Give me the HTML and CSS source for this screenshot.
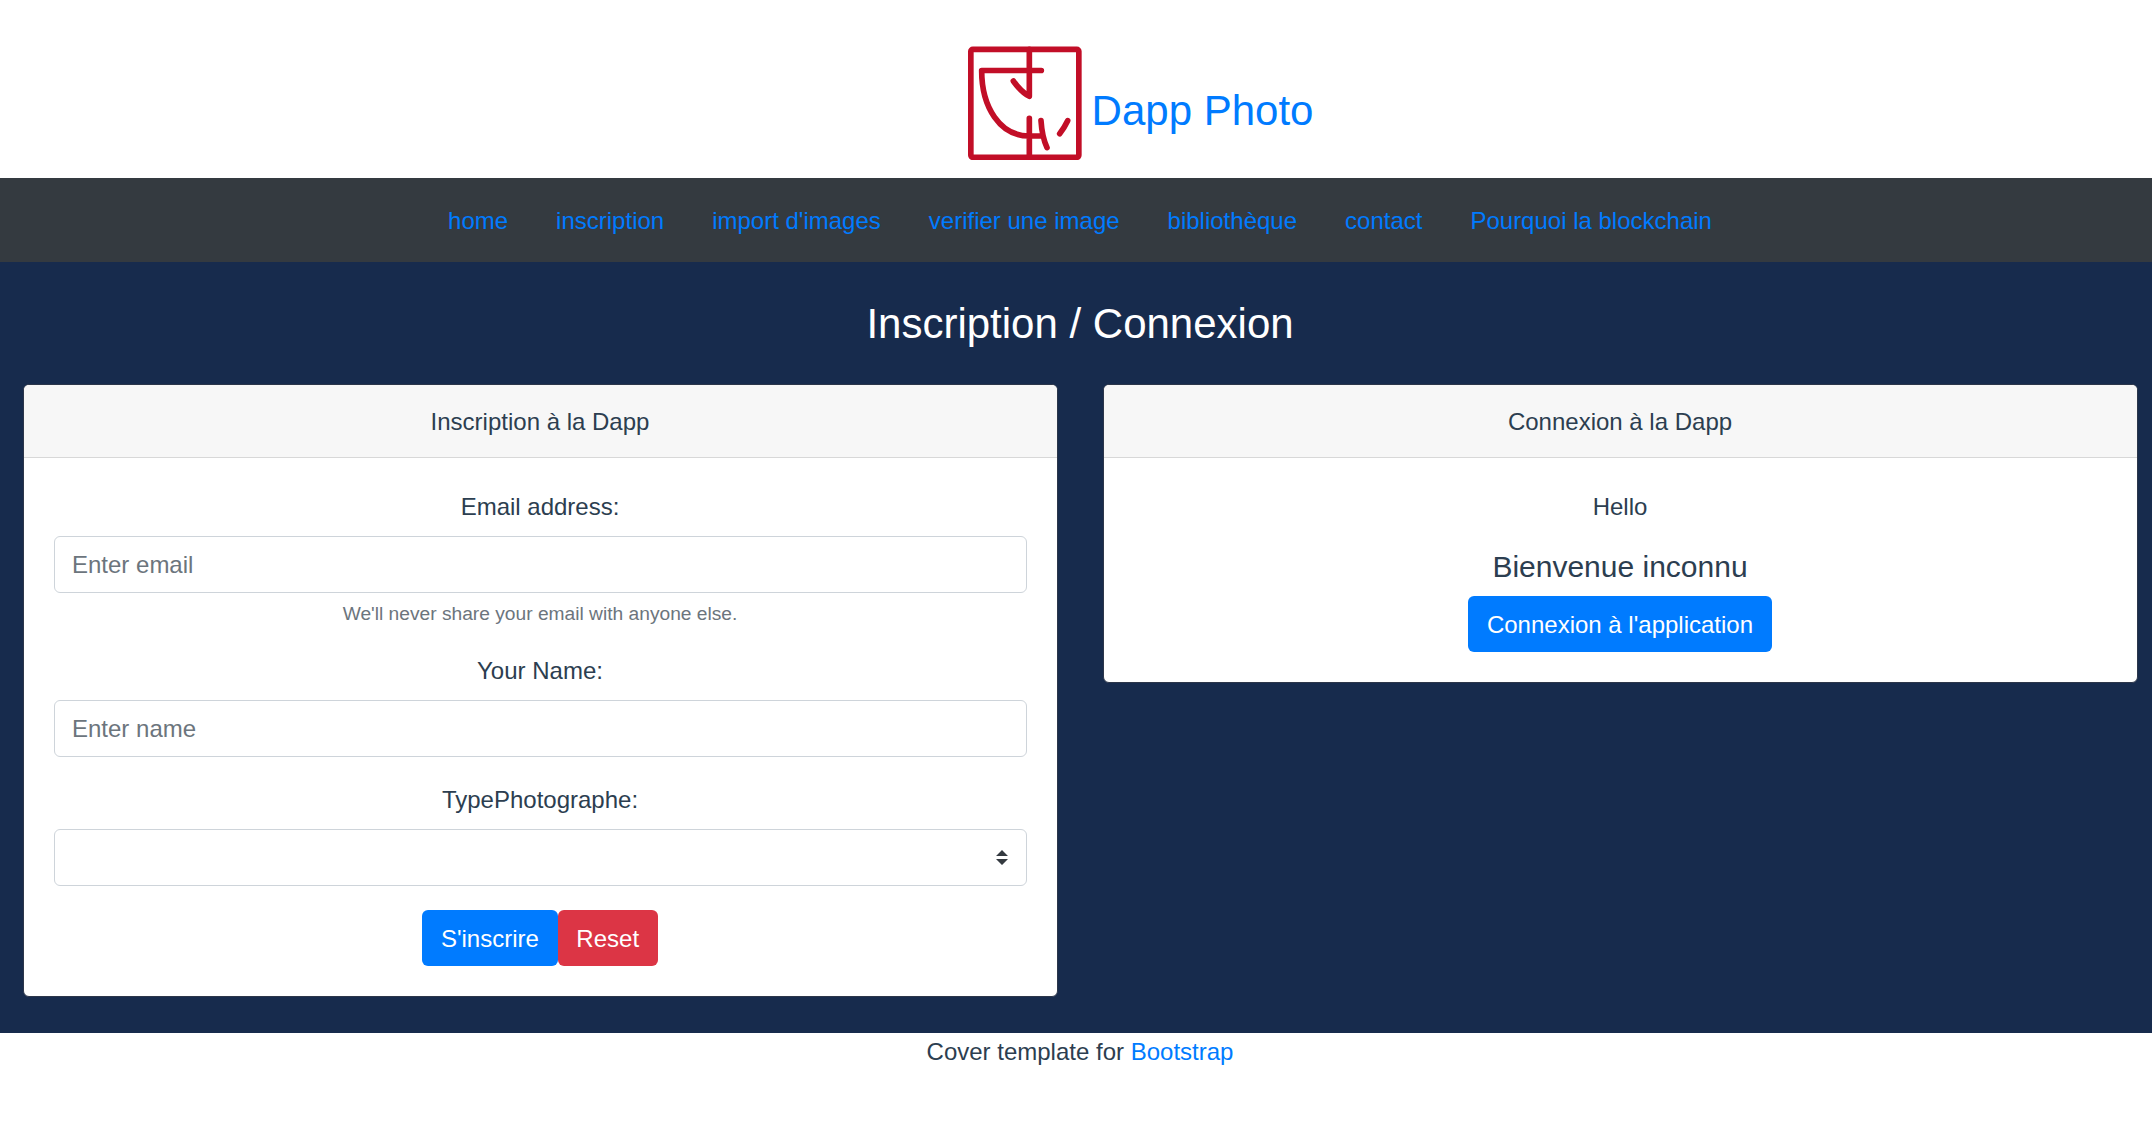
FILE: index.html
```html
<!DOCTYPE html>
<html lang="fr">
<head>
<meta charset="utf-8">
<title>Dapp Photo</title>
<link rel="stylesheet" href="styles.css">
</head>
<body>
<div class="app">
  <header class="masthead">
    <a class="brand" href="#">
      <svg class="logo" viewBox="54 48 342 342" fill="none" stroke="#c20e27" stroke-width="17" stroke-linecap="round" stroke-linejoin="round" aria-hidden="true">
        <rect x="62.500" y="58" width="324" height="324" rx="6"/>
        <path d="M238 58V199Q214 187 190 153M274 121.500H95C95 232 150 318 238 318H270M238 265V382M273 272Q276 320 291 353M353 272Q343 293 329 311"/>
      </svg>
      <span class="brand-name">Dapp Photo</span>
    </a>
  </header>
  <nav class="nav">
    <a href="#">home</a>
    <a href="#">inscription</a>
    <a href="#">import d'images</a>
    <a href="#">verifier une image</a>
    <a href="#">bibliothèque</a>
    <a href="#">contact</a>
    <a href="#">Pourquoi la blockchain</a>
  </nav>
  <main class="main">
    <h1 class="title">Inscription / Connexion</h1>
    <div class="columns">
      <section class="card">
        <div class="card-header">Inscription à la Dapp</div>
        <form class="card-body">
          <div class="group">
            <label for="email">Email address:</label>
            <input class="control" id="email" type="email" placeholder="Enter email">
            <small class="hint">We'll never share your email with anyone else.</small>
          </div>
          <div class="group">
            <label for="name">Your Name:</label>
            <input class="control" id="name" type="text" placeholder="Enter name">
          </div>
          <div class="group">
            <label for="type">TypePhotographe:</label>
            <select class="control select" id="type"><option></option></select>
          </div>
          <div class="actions">
            <button class="btn primary" type="button">S'inscrire</button>
            <button class="btn danger" type="reset">Reset</button>
          </div>
        </form>
      </section>
      <section class="card">
        <div class="card-header">Connexion à la Dapp</div>
        <div class="card-body">
          <p class="hello">Hello</p>
          <h2 class="welcome">Bienvenue inconnu</h2>
          <div class="actions">
            <button class="btn primary" type="button">Connexion à l'application</button>
          </div>
        </div>
      </section>
    </div>
  </main>
  <footer class="footer">Cover template for <a href="#">Bootstrap</a></footer>
</div>
</body>
</html>
```

FILE: styles.css
```css
*, *::before, *::after { box-sizing: border-box; }
html { overflow: hidden; }
body {
  margin: 0;
  background: #fff;
  color: #2c3e50;
  font: 24px/36px "Liberation Sans", Arial, sans-serif;
  text-align: center;
}
a { color: #007bff; text-decoration: none; }

.app { width: 2160px; }

.masthead {
  height: 178px;
  padding: 46px 0 0 121px;
  display: flex;
  justify-content: center;
}
.brand { display: flex; align-items: flex-start; gap: 10px; height: 114px; }
.logo { width: 114px; height: 114px; }
.brand-name { font-size: 42px; line-height: 50px; padding-top: 40px; }

.nav {
  height: 84px;
  padding: 25px 0 23px;
  display: flex;
  justify-content: center;
  gap: 48px;
  background: #343a40;
}

.main { height: 771px; padding: 37px 22.5px 0; background: #172b4d; }
.title { margin: 0 0 35px; font-size: 42px; line-height: 50px; font-weight: 400; color: #fff; }
.columns { display: grid; grid-template-columns: 1fr 1fr; gap: 45px; align-items: start; }

.card {
  background: #fff;
  border: 1px solid #2c364a;
  border-radius: 6px;
}
.card-header {
  padding: 19px 30px 17px;
  background: #f7f7f7;
  border-bottom: 1px solid #d8d8d8;
  border-radius: 5px 5px 0 0;
}
.card-body { padding: 30px; }
.group { margin-bottom: 24px; }
.group label { display: block; margin-bottom: 10px; line-height: 38px; }
.control {
  display: block;
  width: 100%;
  height: 57px;
  padding: 9px 17.5px;
  border: 1px solid #ced4da;
  border-radius: 6px;
  background: #fff;
  color: #495057;
  font: inherit;
}
.control::placeholder { color: #6c757d; opacity: 1; }
.select {
  appearance: none;
  background: #fff url("data:image/svg+xml,%3Csvg xmlns='http://www.w3.org/2000/svg' viewBox='0 0 4 5'%3E%3Cpath fill='%23343a40' d='M2 0L0 2h4zm0 5L0 3h4z'/%3E%3C/svg%3E") no-repeat right 18px center / 12px 15px;
}
.hint { display: block; margin-top: 6px; font-size: 19.2px; line-height: 29px; color: #6c757d; }
.actions { display: flex; justify-content: center; }
.btn {
  height: 56px;
  padding: 2px 18.75px 0;
  border: 0;
  border-radius: 6px;
  color: #fff;
  font: inherit;
}
.primary { background: #007bff; }
.danger { background: #dc3545; }
.hello { margin: 0 0 22px; line-height: 38px; }
.welcome { margin: 0 0 11px; padding-top: 1px; font-size: 30px; line-height: 36px; font-weight: 400; }
.footer { padding-top: 1px; }
```
